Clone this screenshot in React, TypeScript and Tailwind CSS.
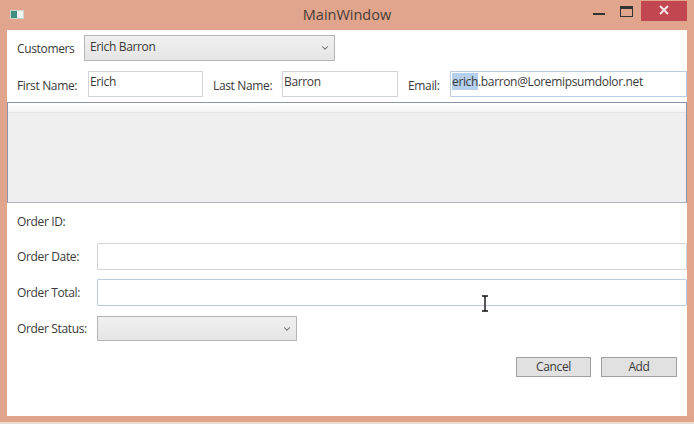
import { ChevronDown } from "lucide-react";

function Combo({ className, value }: { className: string; value?: string }) {
  return (
    <div
      className={`flex items-center justify-between border border-[#b4b4b4] bg-gradient-to-b from-[#f0f0f0] to-[#e5e5e5] pl-[5px] pr-[4px] ${className}`}
    >
      <span className="-mt-[3px]">{value}</span>
      <ChevronDown size={10} strokeWidth={2.5} className="text-[#666]" />
    </div>
  );
}

function TextBox({ className, value, focused }: { className: string; value?: React.ReactNode; focused?: boolean }) {
  return (
    <div
      className={`border px-[1px] pt-[1px] leading-[18px] ${focused ? "border-[#bccde2]" : "border-[#d0d3d8]"} bg-white ${className}`}
    >
      {value}
    </div>
  );
}

export default function App() {
  return (
    <div className="relative h-[424px] w-[694px] overflow-hidden bg-[#e0a58c] font-['Open_Sans','Noto_Sans',sans-serif] text-[12px] tracking-[-0.35px] text-[#3a3a3a]">
      {/* title bar */}
      <div className="grid h-[30px] grid-cols-[1fr_auto_1fr] items-start">
        <div className="ml-[10px] mt-[10px] flex h-[9px] w-[14px] border border-[#c9d4cc] bg-[#f2f4f2]">
          <div className="w-[6px] bg-[#3f8f80]" />
        </div>
        <div className="pt-[5px] text-[14.5px] leading-[20px] tracking-normal text-[#4a3d38]">MainWindow</div>
        <div className="flex justify-end pr-[7px]">
          <div className="mr-[15px] mt-[13px] h-[2px] w-[12px] bg-[#333]" />
          <div className="mr-[8px] mt-[6px] h-[11px] w-[13px] border border-t-[3px] border-[#333]" />
          <div className="mt-[1px] flex h-[20px] w-[46px] items-center justify-center bg-[#c14650] pb-[2px]">
            <svg width="10" height="10" viewBox="0 0 10 10">
              <path d="M1 1 L9 9 M9 1 L1 9" stroke="#f7e6e6" strokeWidth="2" />
            </svg>
          </div>
        </div>
      </div>

      {/* client area */}
      <div className="ml-[7px] mr-[7px] flex h-[386px] flex-col bg-white">
        <div className="mt-[5px] flex h-[26px] items-center">
          <span className="ml-[10px] mt-[1px] w-[67px]">Customers</span>
          <Combo className="h-[26px] w-[251px]" value="Erich Barron" />
        </div>

        <div className="mt-[10px] flex h-[26px] items-center">
          <span className="ml-[10px] w-[71px] pt-[3px]">First Name:</span>
          <TextBox className="h-[26px] w-[115px]" value="Erich" />
          <span className="ml-[10px] w-[69px] pt-[3px]">Last Name:</span>
          <TextBox className="h-[26px] w-[116px]" value="Barron" />
          <span className="ml-[10px] w-[42px] pt-[3px]">Email:</span>
          <TextBox
            focused
            className="h-[26px] w-[237px]"
            value={
              <>
                <span className="bg-[#b5cfee]">erich</span>.barron@Loremipsumdolor.net
              </>
            }
          />
        </div>

        {/* empty data grid */}
        <div className="mt-[5px] h-[101px] border border-[#8d93a6] border-b-[#a9b2c6] bg-[#efefef]">
          <div className="h-[10px] border-b border-[#e6e6e6] bg-gradient-to-b from-white to-[#f4f4f4]" />
        </div>

        <div className="ml-[10px] mt-[10px] h-[18px] leading-[18px]">Order ID:</div>

        <div className="mt-[12px] flex h-[27px] items-center">
          <span className="ml-[10px] w-[80px]">Order Date:</span>
          <TextBox className="h-[27px] flex-1 rounded-[1px]" />
        </div>
        <div className="mt-[9px] flex h-[27px] items-center">
          <span className="ml-[10px] w-[80px]">Order Total:</span>
          <TextBox focused className="h-[27px] flex-1 rounded-[1px]" />
        </div>
        <div className="mt-[10px] flex h-[25px] items-center">
          <span className="ml-[10px] w-[80px]">Order Status:</span>
          <Combo className="h-[25px] w-[200px]" />
        </div>

        <div className="mt-[16px] flex justify-end gap-[10px] pr-[10px]">
          <button className="h-[20px] w-[75px] border border-[#a0a0a0] bg-[#e1e1e1] leading-[18px]">Cancel</button>
          <button className="h-[20px] w-[76px] border border-[#a0a0a0] bg-[#e1e1e1] leading-[18px]">Add</button>
        </div>
      </div>

      {/* text cursor over the Order Total box */}
      <svg className="absolute left-[481px] top-[295px]" width="8" height="17" viewBox="0 0 8 17">
        <path d="M1 1 H7 M4 1 V16 M1 16 H7" stroke="#111" strokeWidth="1.4" fill="none" />
      </svg>

      <div className="absolute bottom-0 left-0 h-[2px] w-full bg-[#ecd9d0]" />
    </div>
  );
}
